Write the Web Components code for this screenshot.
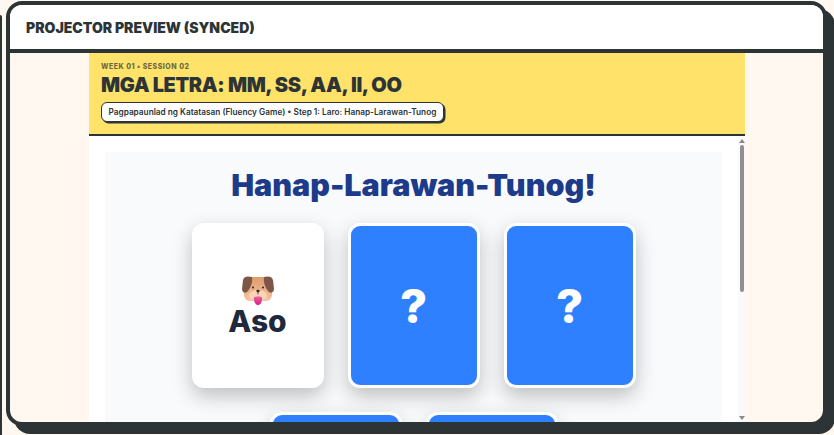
<!DOCTYPE html>
<html>
<head>
<meta charset="utf-8">
<style>
    html, body { margin: 0; height: 100%; overflow: hidden; background: #fff8f0; }
    body {
        display: flex;
        align-items: flex-start;
        padding-top: 1px;
        box-sizing: border-box;
        font-family: Inter, "Liberation Sans", sans-serif;
        color: #2d3436;
    }
    .edge {
        flex: none;
        width: 2px;
        height: 420px;
        margin: 14px 4px 0 0;
        background: #2d3436;
        border-top-right-radius: 2px;
    }
</style>
</head>
<body>
<div class="edge"></div>
<preview-panel title-text="PROJECTOR PREVIEW (SYNCED)">
    <slide-header week="WEEK 01 • SESSION 02" heading="MGA LETRA: MM, SS, AA, II, OO"
        step="Pagpapaunlad ng Katatasan (Fluency Game) • Step 1: Laro: Hanap-Larawan-Tunog"></slide-header>
    <match-game heading="Hanap-Larawan-Tunog!">
        <flip-card open label="Aso"></flip-card>
        <flip-card mark="?"></flip-card>
        <flip-card mark="?"></flip-card>
        <flip-card></flip-card>
        <flip-card></flip-card>
    </match-game>
</preview-panel>

<script>
class PreviewPanel extends HTMLElement {
    constructor() {
        super();
        this.shadowDOM = this.attachShadow({ mode: "open" });
    }

    connectedCallback() {
        this.shadowDOM.innerHTML = `
        <style>
            :host {
                flex: none;
                width: 821px;
                height: 425px;
                box-sizing: border-box;
                border: 4px solid #2d3436;
                border-radius: 16px;
                box-shadow: 8px 8px 0 #2d3436;
                background: #fff8f0;
                overflow: hidden;
                display: flex;
                flex-direction: column;
            }
            header {
                flex: none;
                height: 44px;
                background: #fff;
                border-bottom: 4px solid #2d3436;
                padding-left: 16px;
                display: flex;
                align-items: center;
                font-size: 14px;
                font-weight: 900;
            }
            .stage {
                flex: 1;
                min-height: 0;
                width: 656px;
                margin-left: 79px;
                display: flex;
                flex-direction: column;
                background: #fff;
            }
            .body {
                flex: 1;
                min-height: 0;
                display: flex;
            }
            .scroller {
                flex: 1;
                min-width: 0;
                overflow: hidden;
                padding: 16px 16px 0;
            }
            .rail {
                flex: none;
                width: 7px;
                background: #fafafa;
                display: flex;
                flex-direction: column;
                align-items: center;
                padding-top: 3px;
                box-sizing: border-box;
            }
            .rail i {
                flex: none;
                width: 0;
                height: 0;
                border: 3px solid transparent;
                border-top: 0;
                border-bottom: 4px solid #8a8a8a;
            }
            .rail b {
                flex: none;
                width: 4px;
                height: 147px;
                margin-top: 2px;
                border-radius: 2px;
                background: #8f8f8f;
            }
            .rail i.down {
                margin-top: auto;
                margin-bottom: 2px;
                border: 3px solid transparent;
                border-bottom: 0;
                border-top: 4px solid #8a8a8a;
            }
        </style>
        <header>${this.getAttribute("title-text")}</header>
        <div class="stage">
            <slot name="top"></slot>
            <div class="body">
                <div class="scroller"><slot></slot></div>
                <div class="rail"><i></i><b></b><i class="down"></i></div>
            </div>
        </div>`;
        this.querySelector("slide-header").slot = "top";
    }
}

class SlideHeader extends HTMLElement {
    constructor() {
        super();
        this.shadowDOM = this.attachShadow({ mode: "open" });
    }

    connectedCallback() {
        this.shadowDOM.innerHTML = `
        <style>
            :host {
                display: block;
                flex: none;
                background: #ffe26a;
                border-bottom: 2px solid #2d3436;
                padding: 9px 12px 12px;
            }
            .week {
                font-size: 7px;
                line-height: 10px;
                font-weight: 800;
                letter-spacing: .5px;
                opacity: .7;
            }
            h1 {
                margin: 1px 0 4px;
                font-size: 20px;
                line-height: 25px;
                font-weight: 900;
                letter-spacing: -.4px;
            }
            .step {
                display: block;
                width: fit-content;
                background: #fff;
                border: 1.5px solid #2d3436;
                border-radius: 6px;
                box-shadow: 1.5px 1.5px 0 #2d3436;
                padding: 0 6.5px;
                font-size: 8.25px;
                line-height: 18px;
                font-weight: 600;
            }
        </style>
        <div class="week">${this.getAttribute("week")}</div>
        <h1>${this.getAttribute("heading")}</h1>
        <div class="step">${this.getAttribute("step")}</div>`;
    }
}

class MatchGame extends HTMLElement {
    constructor() {
        super();
        this.shadowDOM = this.attachShadow({ mode: "open" });
    }

    connectedCallback() {
        this.shadowDOM.innerHTML = `
        <style>
            :host {
                display: block;
                background: #f8fafc;
                padding: 13px 0 40px;
            }
            h2 {
                margin: 0 0 18px;
                text-align: center;
                font-size: 30.5px;
                line-height: 40px;
                font-weight: 900;
                color: #1e3a8a;
            }
            .cards {
                display: flex;
                flex-wrap: wrap;
                justify-content: center;
                gap: 24px;
                width: 444px;
                margin: 0 auto;
            }
        </style>
        <h2>${this.getAttribute("heading")}</h2>
        <div class="cards"><slot></slot></div>`;
    }
}

class FlipCard extends HTMLElement {
    constructor() {
        super();
        this.shadowDOM = this.attachShadow({ mode: "open" });
    }

    connectedCallback() {
        const open = this.hasAttribute("open");
        const mark = this.getAttribute("mark");
        let body = "";
        if (open) {
            body = `<svg width="32" height="30" viewBox="0 0 32 30">
                <defs>
                    <linearGradient id="fur" x1="0" y1="0" x2="0" y2="1">
                        <stop offset="0" stop-color="#dd9c6e"/>
                        <stop offset="1" stop-color="#f6c4a0"/>
                    </linearGradient>
                    <linearGradient id="tongue" x1="0" y1="0" x2="0" y2="1">
                        <stop offset="0" stop-color="#f0609f"/>
                        <stop offset="1" stop-color="#d6237f"/>
                    </linearGradient>
                </defs>
                <rect x="2" y="1" width="28" height="24" rx="6" fill="url(#fur)"/>
                <path d="M10 1C6 0 2 0 1 4L0 13c0 3 3 5 5 3 3-3 6-9 5-15zM22 1c4-1 8-1 9 3l1 9c0 3-3 5-5 3-3-3-6-9-5-15z" fill="#7d5648"/>
                <ellipse cx="16" cy="19.500" rx="9" ry="5.500" fill="#f9d4b6"/>
                <circle cx="11" cy="11.500" r="1" fill="#2d2320"/>
                <circle cx="21" cy="11.500" r="1" fill="#2d2320"/>
                <ellipse cx="16" cy="15" rx="1.700" ry="1.300" fill="#2d2320"/>
                <path d="M16 16v2.500" stroke="#2d2320" stroke-width=".7"/>
                <path d="M12 21.500c1-1.500 7-1.500 8 0 .5 4-1.500 7.500-4 7.500s-4.500-3.500-4-7.500z" fill="url(#tongue)"/>
            </svg><div class="label">${this.getAttribute("label")}</div>`;
        } else if (mark) {
            body = `<div class="mark">${mark}</div>`;
        }
        this.shadowDOM.innerHTML = `
        <style>
            :host {
                display: flex;
                flex-direction: column;
                align-items: center;
                justify-content: center;
                width: 132px;
                height: 165px;
                box-sizing: border-box;
                border: 3px solid #fff;
                border-radius: 12px;
                background: ${open ? "#fff" : "#2f80ff"};
                box-shadow: 0 8px 20px rgba(0,0,0,.24);
            }
            svg { display: block; }
            .label {
                font-size: 30px;
                line-height: 30px;
                font-weight: 800;
                color: #1e293b;
            }
            .mark {
                font-size: 47px;
                font-weight: 800;
                line-height: 1;
                color: #fff;
            }
        </style>
        ${body}`;
    }
}

customElements.define("preview-panel", PreviewPanel);
customElements.define("slide-header", SlideHeader);
customElements.define("match-game", MatchGame);
customElements.define("flip-card", FlipCard);
</script>
</body>
</html>
